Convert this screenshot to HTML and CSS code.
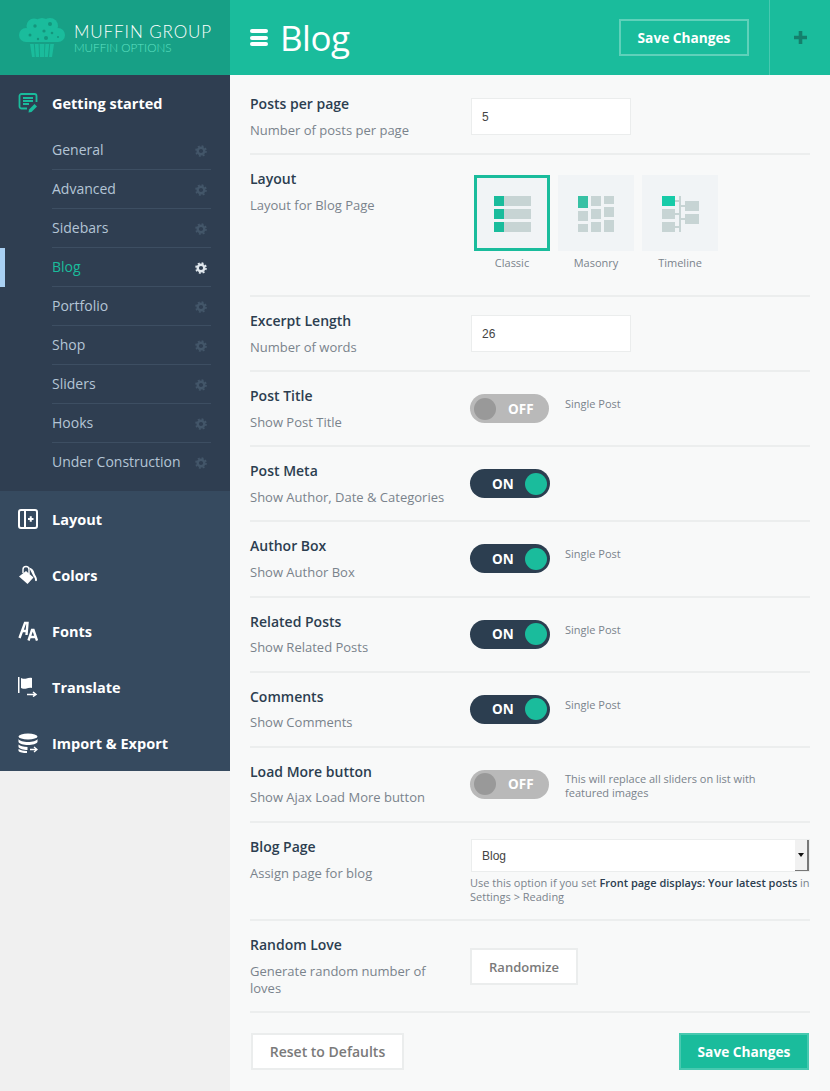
FILE: index.html
```html
<!DOCTYPE html>
<html lang="en">
<head>
  <meta charset="UTF-8" />
  <title>Muffin Options - Blog</title>
  <link rel="stylesheet" href="styles.css">
</head>
<body>

<svg class="defs" width="0" height="0">
  <symbol id="gear" viewBox="0 0 12 12">
    <circle cx="6" cy="6" r="3.3" fill="none" stroke="currentColor" stroke-width="2.4"/>
    <circle cx="6" cy="6" r="5" fill="none" stroke="currentColor" stroke-width="1.6" stroke-dasharray="2 1.93"/>
  </symbol>
</svg>

<aside class="sidebar">
  <div class="logo">
    <svg class="logo-mark" width="46" height="39" viewBox="0 0 46 39">
      <g fill="#1abc9c">
        <circle cx="15" cy="8" r="7.500"/><circle cx="31" cy="8" r="8"/><circle cx="23" cy="9" r="9"/>
        <circle cx="7" cy="17" r="7"/><circle cx="39" cy="17" r="7"/>
        <rect x="7" y="12" width="32" height="12"/>
        <path d="M11 26h3.800l1 13H13zM15.800 26h3.800l.5 13h-3.300zM20.600 26h4.800l-.4 13h-4zM26.400 26h3.800l-1.300 13h-3.300zM31.200 26H35l-2 13h-2.900z"/>
      </g>
      <g fill="#14967d">
        <circle cx="16" cy="8" r="1.700"/><circle cx="31" cy="6" r="2"/><circle cx="25" cy="13" r="1.600"/>
        <circle cx="11" cy="17" r="1.500"/><circle cx="27" cy="20" r="2"/><circle cx="33" cy="15" r="1.300"/><circle cx="39" cy="19" r="1"/><circle cx="19" cy="21" r="1.200"/>
      </g>
    </svg>
    <div class="logo-text">
      <div class="logo-name">MUFFIN GROUP</div>
      <div class="logo-sub">MUFFIN OPTIONS</div>
    </div>
  </div>

  <div class="nav-open">
    <div class="nav-head">
      <svg class="nav-icon" width="20" height="20" viewBox="0 0 20 20" fill="none" stroke="#1abc9c" stroke-width="1.800">
        <path d="M9 15.500H3.500a2 2 0 0 1-2-2V3a2 2 0 0 1 2-2h13a2 2 0 0 1 2 2v6"/>
        <path d="M5 5h10M5 8h10M5 11h6" />
        <path d="M10.500 19.500l.5-3 5.500-5.500 2.500 2.500-5.500 5.500z" fill="#1abc9c" stroke="none"/>
      </svg>
      <span>Getting started</span>
    </div>
    <ul class="subnav">
      <li><span>General</span><svg class="gear"><use href="#gear"/></svg></li>
      <li><span>Advanced</span><svg class="gear"><use href="#gear"/></svg></li>
      <li><span>Sidebars</span><svg class="gear"><use href="#gear"/></svg></li>
      <li class="active"><span>Blog</span><svg class="gear"><use href="#gear"/></svg></li>
      <li><span>Portfolio</span><svg class="gear"><use href="#gear"/></svg></li>
      <li><span>Shop</span><svg class="gear"><use href="#gear"/></svg></li>
      <li><span>Sliders</span><svg class="gear"><use href="#gear"/></svg></li>
      <li><span>Hooks</span><svg class="gear"><use href="#gear"/></svg></li>
      <li><span>Under Construction</span><svg class="gear"><use href="#gear"/></svg></li>
    </ul>
  </div>

  <ul class="nav-closed">
    <li>
      <svg class="nav-icon" width="20" height="20" viewBox="0 0 20 20" fill="none" stroke="#fff" stroke-width="2">
        <rect x="1" y="1" width="18" height="18" rx="2"/>
        <path d="M7 1v18M10 10h5.500M12.750 7.250v5.500"/>
      </svg>
      <span>Layout</span>
    </li>
    <li>
      <svg class="nav-icon" width="20" height="20" viewBox="0 0 20 20" fill="#fff">
        <path d="M8 6l7.500 6.500-6 6.500-8.500-7.500z"/>
        <path d="M5 8V4.500a3 3 0 0 1 6 0V9" fill="none" stroke="#fff" stroke-width="1.400"/>
        <path d="M11 2.500c3 .5 5 3 5.500 6 .8 2 2.500 3.500 2.500 6.500 0 1.500-2 1.500-2 0 0-1.500-.5-2.500-1.500-3.500z"/>
      </svg>
      <span>Colors</span>
    </li>
    <li>
      <svg class="nav-icon" width="20" height="20" viewBox="0 0 20 20" fill="none" stroke="#fff" stroke-width="2.400">
        <path d="M1.500 17L7 2h2.500L8.500 14M4 10h4.500"/>
        <path d="M10.500 19.500L14 9h1.500l3.500 10.500M12 16h5.500"/>
      </svg>
      <span>Fonts</span>
    </li>
    <li>
      <svg class="nav-icon" width="20" height="20" viewBox="0 0 20 20" fill="#fff">
        <path d="M0 0h1.500v16H0z"/>
        <path d="M3 1c2.500 1 4 1 5.500.5s3.500-1 5.500-.5v10c-2-.5-4 0-5.500.5s-3 .5-5.500-.5z"/>
        <path d="M9 17.500h8M15 15l3 2.500-3 2" fill="none" stroke="#fff" stroke-width="1.500"/>
      </svg>
      <span>Translate</span>
    </li>
    <li>
      <svg class="nav-icon" width="20" height="20" viewBox="0 0 20 20" fill="#fff">
        <ellipse cx="10" cy="3.500" rx="9.500" ry="3"/>
        <path d="M.5 6c1 2 5 3 9.500 3s8.500-1 9.500-3v3c-1 2-5 3-9.500 3S1.500 11 .5 9z"/>
        <path d="M.5 11.500c1.500 1.500 5 2.500 9 2.500v3c-4 0-8-1-9-3z"/>
        <path d="M.5 16c2 1.200 5 2 8.500 2v2c-4 0-7.500-.5-8.500-2z"/>
        <path d="M12 16.500h6.500M16 14l3 2.500-3 2.500" fill="none" stroke="#fff" stroke-width="1.300"/>
      </svg>
      <span>Import &amp; Export</span>
    </li>
  </ul>
</aside>

<div class="content">
  <header class="topbar">
    <div class="burger"><i></i><i></i><i></i></div>
    <h1>Blog</h1>
    <button class="btn btn-ghost" type="button">Save Changes</button>
    <div class="topbar-plus">
      <svg width="13" height="13" viewBox="0 0 13 13"><path fill="#14806c" d="M4.700 0h3.600v4.700H13v3.600H8.300V13H4.700V8.300H0V4.700h4.700z"/></svg>
    </div>
  </header>

  <main class="options">
    <section class="row row-first">
      <div class="label"><h3>Posts per page</h3><p>Number of posts per page</p></div>
      <div class="control control-input"><input class="text-input" type="text" value="5"></div>
    </section>

    <section class="row row-layout">
      <div class="label"><h3>Layout</h3><p>Layout for Blog Page</p></div>
      <div class="control thumbs">
        <figure class="thumb selected">
          <svg width="76" height="76" viewBox="0 0 76 76">
            <rect class="fill-grey" x="20" y="21" width="37" height="10"/><rect class="fill-grey" x="20" y="34" width="37" height="10"/><rect class="fill-grey" x="20" y="47" width="37" height="10"/>
            <rect class="fill-green" x="20" y="21" width="10" height="10"/><rect class="fill-green" x="20" y="34" width="10" height="10"/><rect class="fill-green" x="20" y="47" width="10" height="10"/>
          </svg>
          <figcaption>Classic</figcaption>
        </figure>
        <figure class="thumb">
          <svg width="76" height="76" viewBox="0 0 76 76">
            <rect class="fill-green-soft" x="20" y="21" width="10" height="12"/><rect class="fill-grey" x="20" y="36" width="10" height="10"/><rect class="fill-grey" x="20" y="49" width="10" height="8"/>
            <rect class="fill-grey" x="33" y="21" width="10" height="10"/><rect class="fill-grey" x="33" y="34" width="10" height="10"/><rect class="fill-grey" x="33" y="47" width="10" height="10"/>
            <rect class="fill-grey" x="46" y="21" width="10" height="8"/><rect class="fill-grey" x="46" y="32" width="10" height="10"/><rect class="fill-grey" x="46" y="45" width="10" height="12"/>
          </svg>
          <figcaption>Masonry</figcaption>
        </figure>
        <figure class="thumb">
          <svg width="76" height="76" viewBox="0 0 76 76">
            <rect class="fill-green-bright" x="20" y="21" width="13" height="10"/><rect class="fill-grey" x="20" y="34" width="13" height="10"/><rect class="fill-grey" x="20" y="47" width="13" height="10"/>
            <rect class="fill-grey" x="37" y="21" width="2" height="36"/>
            <rect class="fill-grey" x="33" y="25" width="4" height="2"/><rect class="fill-grey" x="33" y="38" width="4" height="2"/><rect class="fill-grey" x="33" y="51" width="4" height="2"/>
            <rect class="fill-grey" x="39" y="30" width="4" height="2"/><rect class="fill-grey" x="39" y="43" width="4" height="2"/>
            <rect class="fill-grey" x="43" y="26" width="14" height="10"/><rect class="fill-grey" x="43" y="39" width="14" height="10"/>
          </svg>
          <figcaption>Timeline</figcaption>
        </figure>
      </div>
    </section>

    <section class="row">
      <div class="label"><h3>Excerpt Length</h3><p>Number of words</p></div>
      <div class="control control-input"><input class="text-input" type="text" value="26"></div>
    </section>

    <section class="row">
      <div class="label"><h3>Post Title</h3><p>Show Post Title</p></div>
      <div class="control switch-line"><div class="switch off"><b></b><span>OFF</span></div><p class="note">Single Post</p></div>
    </section>

    <section class="row">
      <div class="label"><h3>Post Meta</h3><p>Show Author, Date &amp; Categories</p></div>
      <div class="control switch-line"><div class="switch on"><span>ON</span><b></b></div></div>
    </section>

    <section class="row">
      <div class="label"><h3>Author Box</h3><p>Show Author Box</p></div>
      <div class="control switch-line"><div class="switch on"><span>ON</span><b></b></div><p class="note">Single Post</p></div>
    </section>

    <section class="row">
      <div class="label"><h3>Related Posts</h3><p>Show Related Posts</p></div>
      <div class="control switch-line"><div class="switch on"><span>ON</span><b></b></div><p class="note">Single Post</p></div>
    </section>

    <section class="row">
      <div class="label"><h3>Comments</h3><p>Show Comments</p></div>
      <div class="control switch-line"><div class="switch on"><span>ON</span><b></b></div><p class="note">Single Post</p></div>
    </section>

    <section class="row">
      <div class="label"><h3>Load More button</h3><p>Show Ajax Load More button</p></div>
      <div class="control switch-line"><div class="switch off"><b></b><span>OFF</span></div><p class="note note-wide">This will replace all sliders on list with featured images</p></div>
    </section>

    <section class="row row-select">
      <div class="label"><h3>Blog Page</h3><p>Assign page for blog</p></div>
      <div class="control control-select">
        <div class="select"><span>Blog</span><i class="select-arrow"></i></div>
        <p class="hint">Use this option if you set <strong>Front page displays: Your latest posts</strong> in Settings &gt; Reading</p>
      </div>
    </section>

    <section class="row row-random">
      <div class="label"><h3>Random Love</h3><p>Generate random number of loves</p></div>
      <div class="control control-random"><button class="btn btn-plain btn-small" type="button">Randomize</button></div>
    </section>

    <footer class="actions">
      <button class="btn btn-plain" type="button">Reset to Defaults</button>
      <button class="btn btn-solid" type="button">Save Changes</button>
    </footer>
  </main>
</div>

</body>
</html>
```

FILE: styles.css
```css
* { box-sizing: border-box; margin: 0; padding: 0; }

html, body { height: 100%; }

body {
  font-family: 'Open Sans', sans-serif;
  background: #f0f0f0;
  color: #2c3e50;
  display: flex;
  min-height: 1091px;
  overflow: hidden;
}

.defs { position: absolute; }

ul { list-style: none; }

/* sidebar */
.sidebar {
  width: 230px;
  flex: none;
}

.logo {
  height: 75px;
  background: #17a086;
  display: flex;
  align-items: center;
  gap: 9px;
  padding-left: 19px;
}

.logo-mark { display: block; flex: none; }

.logo-text {
  font-family: 'Lato', sans-serif;
  font-weight: 300;
  white-space: nowrap;
  padding-top: 2px;
}

.logo-name {
  color: #fff;
  font-size: 17px;
  line-height: 18px;
  letter-spacing: .9px;
}

.logo-sub {
  color: #5fe0c2;
  font-size: 11.700px;
  line-height: 13px;
}

.nav-open {
  background: #2f3e51;
  height: 416px;
}

.nav-head, .nav-closed li {
  height: 56px;
  display: flex;
  align-items: center;
  gap: 14px;
  padding-left: 18px;
  color: #fff;
  font-size: 14.500px;
  font-weight: 700;
}

.nav-icon { flex: none; }

.subnav li {
  height: 39px;
  margin-left: 52px;
  width: 159px;
  padding-bottom: 2px;
  display: flex;
  align-items: center;
  justify-content: space-between;
  border-bottom: 1px solid #3d4e62;
  font-size: 14px;
  color: #b4c5d6;
  position: relative;
}

.subnav li:last-child { border-bottom: 0; }

.subnav li.active { color: #1abc9c; }

.subnav li.active::before {
  content: "";
  position: absolute;
  left: -52px;
  top: 0;
  width: 5px;
  height: 39px;
  background: #a9d0f2;
}

.gear {
  width: 12px;
  height: 12px;
  margin: 3px 4px 0 0;
  color: #435669;
}

.active .gear { color: #dfe6ec; }

.nav-closed {
  background: #364a5f;
  height: 280px;
}

/* top bar */
.content {
  flex: 1;
  display: flex;
  flex-direction: column;
  min-width: 0;
  background: #f8f9f9;
}

.topbar {
  height: 75px;
  flex: none;
  background: #1abc9c;
  display: flex;
  align-items: center;
  padding-left: 20px;
}

.burger {
  display: flex;
  flex-direction: column;
  gap: 2.500px;
  width: 18px;
  margin-right: 12px;
}

.burger i {
  display: block;
  height: 4px;
  border-radius: 2px;
  background: #fff;
}

.topbar h1 {
  font-size: 35px;
  font-weight: 400;
  color: #fff;
  flex: 1;
  letter-spacing: -.5px;
}

.topbar-plus {
  width: 61px;
  height: 75px;
  margin-left: 20px;
  border-left: 1px solid #48c9b0;
  display: flex;
  align-items: center;
  justify-content: center;
}

/* buttons */
.btn {
  height: 37px;
  font-family: inherit;
  font-size: 13.700px;
  font-weight: 700;
  border: 2px solid;
  background: none;
}

.btn-ghost {
  width: 130px;
  color: #fff;
  border-color: #5fd1ba;
}

.btn-plain {
  width: 153px;
  background: #fff;
  color: #7a7a7a;
  border-color: #ebeded;
  font-size: 14px;
  font-weight: 600;
}

.btn-small {
  width: 108px;
  font-size: 13px;
}

.btn-solid {
  width: 130px;
  background: #1abc9c;
  color: #fff;
  border-color: #48c9b0;
}

/* options */
.options { padding: 0 20px; }

.row {
  display: grid;
  grid-template-columns: 220px 1fr;
  padding: 14px 0;
  min-height: 75.170px;
  border-bottom: 2px solid #eceeee;
}

.row-first { padding: 19px 0 14.500px; }

.row-layout { padding-bottom: 25px; }

.row-select { padding-bottom: 15px; }

.row-random { padding-bottom: 14.500px; }

.label { max-width: 200px; }

.label h3 {
  font-size: 14px;
  font-weight: 600;
  line-height: 20px;
  color: #2c3e50;
}

.label p {
  font-size: 13px;
  line-height: 17px;
  margin-top: 7.500px;
  color: #7a838c;
}

.control-input { padding-top: 4px; }

.control-select { padding-top: 2px; }

.control-random { padding-top: 13px; }

.text-input {
  display: block;
  width: 160px;
  height: 37px;
  margin-left: 1px;
  padding: 0 10px;
  border: 1px solid #ebeded;
  background: #fff;
  font-family: 'Liberation Sans', sans-serif;
  font-size: 12px;
  color: #444;
}

/* layout thumbs */
.thumbs {
  display: flex;
  gap: 8px;
  padding: 6px 0 0 4px;
}

.thumb { width: 76px; }

.thumb svg {
  display: block;
  background: #f1f4f6;
}

.thumb.selected svg {
  outline: 3px solid #1abc9c;
  outline-offset: -3px;
}

.thumb figcaption {
  font-size: 11px;
  line-height: 14px;
  margin-top: 5px;
  text-align: center;
  color: #7a838c;
}

.fill-grey { fill: #c7d4d4; }
.fill-green { fill: #1abc9c; }
.fill-green-soft { fill: #37c1a4; }
.fill-green-bright { fill: #17cba8; }

/* switches */
.switch-line {
  display: flex;
  align-items: flex-start;
  gap: 15px;
  padding-top: 8px;
}

.switch {
  width: 80px;
  height: 29px;
  flex: none;
  border-radius: 15px;
  display: flex;
  align-items: center;
  font-size: 13.500px;
  font-weight: 700;
  color: #fff;
}

.switch b {
  display: block;
  width: 22px;
  height: 22px;
  border-radius: 50%;
}

.switch.on {
  background: #2c3e50;
  justify-content: space-between;
  padding: 0 3px 0 22px;
}

.switch.on b { background: #1abc9c; }

.switch.off {
  background: #b9b9b9;
  width: 79px;
  margin-right: 1px;
  padding-left: 4px;
  gap: 12px;
}

.switch.off b { background: #999; }

.note {
  font-size: 11px;
  line-height: 15px;
  margin-top: 2px;
  color: #7a838c;
}

.note-wide { width: 210px; line-height: 14px; }

/* select */
.select {
  height: 33px;
  margin-left: 1px;
  display: flex;
  align-items: center;
  justify-content: space-between;
  background: #fff;
  border: 1px solid #ebeded;
  padding-left: 10px;
  font-family: 'Liberation Sans', sans-serif;
  font-size: 12px;
  color: #444;
}

.select-arrow {
  width: 14px;
  height: 31px;
  background: #f1f1f1;
  border-right: 2px solid #777;
  border-bottom: 1px solid #777;
  display: flex;
  align-items: center;
  justify-content: center;
}

.select-arrow::after {
  content: "";
  border: 3px solid transparent;
  border-top: 4px solid #111;
  border-bottom: 0;
}

.hint {
  font-size: 11px;
  line-height: 14px;
  margin-top: 4px;
  color: #7a838c;
}

.hint strong { color: #2c3e50; font-weight: 600; }

/* bottom buttons */
.actions {
  display: flex;
  justify-content: space-between;
  padding: 20px 1px 0;
}
```
